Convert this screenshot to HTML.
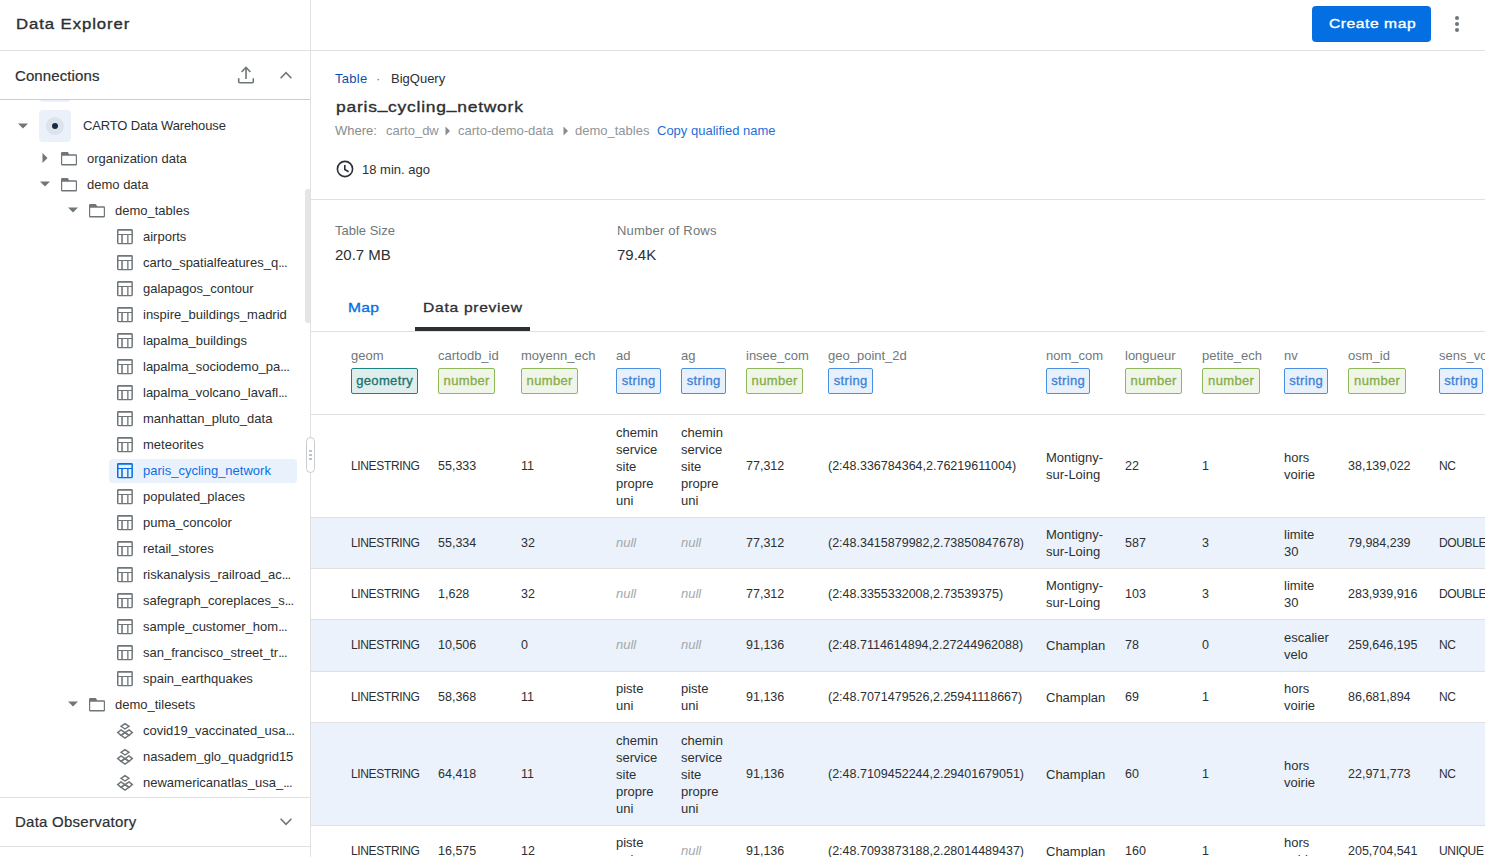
<!DOCTYPE html><html><head><meta charset="utf-8"><style>
*{box-sizing:border-box;margin:0;padding:0}
html,body{width:1485px;height:857px;overflow:hidden;background:#fff}
body{font-family:"Liberation Sans",sans-serif;color:#2c3032;position:relative}
.a{position:absolute;white-space:nowrap}
.hl{position:absolute;background:#e0e0e0}
#side{position:absolute;left:0;top:0;width:310px;height:857px;overflow:hidden}
#main{position:absolute;left:311px;top:0;width:1174px;height:857px;overflow:hidden}
.tree{position:absolute;left:0;top:100px;width:305px;height:697px;overflow:hidden}
.tr{position:absolute;left:0;height:26px;width:305px}
.tt{position:absolute;top:0;line-height:26px;font-size:13px;white-space:nowrap}
svg{position:absolute;overflow:visible}
.cell{position:absolute;display:flex;align-items:center;font-size:13px;line-height:17px;white-space:nowrap}
.sb{-webkit-text-stroke:0.45px currentColor}
.mont{-webkit-text-stroke:0.35px currentColor;transform:scaleX(1.14);transform-origin:0 0}
.cap{font-size:12px;letter-spacing:-0.35px}
.dg{font-size:12.5px}
.null{color:#a3a8ab;font-style:italic;position:relative;top:-0.8px}
.chip{position:absolute;top:368px;height:26px;border:1px solid;border-radius:2px;font-size:13px;font-weight:400;-webkit-text-stroke:0.3px currentColor;letter-spacing:0.35px;line-height:24px;text-align:center;text-indent:0.35px}
.num{border-color:#8fb85a;background:#f0f5e9;color:#86ad45}
.str{border-color:#4a90e2;background:#e7f0fb;color:#3d82d9}
.geo{border-color:#1d8580;background:#e0eded;color:#17746f}
.ch{position:absolute;top:347px;font-size:13px;line-height:17px;color:#6f777b;white-space:nowrap}
</style></head><body>
<div id="side">
<div class="a mont" style="left:15.5px;top:13.7px;font-size:14.7px;line-height:20px;letter-spacing:0.8px">Data Explorer</div>
<div class="hl" style="left:0;top:50px;width:310px;height:1px"></div>
<div class="a" style="left:15px;top:66px;font-size:15px;line-height:20px;letter-spacing:0.1px;-webkit-text-stroke:0.2px currentColor">Connections</div>
<svg style="left:236px;top:65px" width="20" height="20" viewBox="0 0 20 20"><path d="M10 2.5V14 M5.6 7 L10 2.5 L14.4 7 M2.7 13.2V16.8a1 1 0 0 0 1 1H16.3a1 1 0 0 0 1-1V13.2" fill="none" stroke="#6f7679" stroke-width="1.6"/></svg>
<svg style="left:276px;top:65px" width="20" height="20" viewBox="0 0 20 20"><path d="M4.6 13.2 L10 7.6 L15.4 13.2" fill="none" stroke="#6f7679" stroke-width="1.6"/></svg>
<div class="hl" style="left:0;top:99px;width:310px;height:1px;background:#cdcdcd"></div>
<div class="tree">
<div style="position:absolute;left:39px;top:-30px;width:32px;height:32px;border-radius:4px;background:#eaf1fb"></div>
<svg style="left:18px;top:23px" width="10" height="6" viewBox="0 0 10 6"><path d="M0 0.5H10L5 5.5Z" fill="#6f7679"/></svg>
<div style="position:absolute;left:39px;top:10px;width:32px;height:32px;border-radius:4px;background:#eaf1fb"></div>
<div style="position:absolute;left:46px;top:17px;width:18px;height:18px;border-radius:50%;background:#dde3ea"></div>
<div style="position:absolute;left:52px;top:23px;width:6px;height:6px;border-radius:50%;background:#162945"></div>
<div class="tt" style="left:83px;top:13px;letter-spacing:-0.15px">CARTO Data Warehouse</div>
<svg style="left:42px;top:53px" width="6" height="10" viewBox="0 0 6 10"><path d="M0.5 0V10L5.5 5Z" fill="#6f7679"/></svg>
<svg style="left:60px;top:51px" width="18" height="16" viewBox="0 0 18 16"><path fill-rule="evenodd" d="M1 2.3a1.3 1.3 0 0 1 1.3-1.3H7.8L9.2 3.3H15.7a1.3 1.3 0 0 1 1.3 1.3V13.2a1.3 1.3 0 0 1-1.3 1.3H2.3a1.3 1.3 0 0 1-1.3-1.3Z M2.2 4.8V13H15.8V4.8Z" fill="#6f7679"/></svg>
<div class="tt" style="left:87px;top:45.5px;color:#2c3032">organization data</div>
<svg style="left:40px;top:81px" width="10" height="6" viewBox="0 0 10 6"><path d="M0 0.5H10L5 5.5Z" fill="#6f7679"/></svg>
<svg style="left:60px;top:77px" width="18" height="16" viewBox="0 0 18 16"><path fill-rule="evenodd" d="M1 2.3a1.3 1.3 0 0 1 1.3-1.3H7.8L9.2 3.3H15.7a1.3 1.3 0 0 1 1.3 1.3V13.2a1.3 1.3 0 0 1-1.3 1.3H2.3a1.3 1.3 0 0 1-1.3-1.3Z M2.2 4.8V13H15.8V4.8Z" fill="#6f7679"/></svg>
<div class="tt" style="left:87px;top:71.5px;color:#2c3032">demo data</div>
<svg style="left:68px;top:107px" width="10" height="6" viewBox="0 0 10 6"><path d="M0 0.5H10L5 5.5Z" fill="#6f7679"/></svg>
<svg style="left:88px;top:103px" width="18" height="16" viewBox="0 0 18 16"><path fill-rule="evenodd" d="M1 2.3a1.3 1.3 0 0 1 1.3-1.3H7.8L9.2 3.3H15.7a1.3 1.3 0 0 1 1.3 1.3V13.2a1.3 1.3 0 0 1-1.3 1.3H2.3a1.3 1.3 0 0 1-1.3-1.3Z M2.2 4.8V13H15.8V4.8Z" fill="#6f7679"/></svg>
<div class="tt" style="left:115px;top:97.5px;color:#2c3032">demo_tables</div>
<svg style="left:116px;top:128px" width="18" height="18" viewBox="0 0 18 18"><path fill-rule="evenodd" d="M2.4 1H15.5a1.4 1.4 0 0 1 1.4 1.4V14.8a1.4 1.4 0 0 1-1.4 1.4H2.4a1.4 1.4 0 0 1-1.4-1.4V2.4a1.4 1.4 0 0 1 1.4-1.4Z M2.5 2.8V5.9H15.4V2.8Z M2.5 7.1V15H5.25V7.1Z M6.8 7.1V15H11.2V7.1Z M12.5 7.1V15H15.4V7.1Z" fill="#6f7679"/></svg>
<div class="tt" style="left:143px;top:123.5px;color:#2c3032">airports</div>
<svg style="left:116px;top:154px" width="18" height="18" viewBox="0 0 18 18"><path fill-rule="evenodd" d="M2.4 1H15.5a1.4 1.4 0 0 1 1.4 1.4V14.8a1.4 1.4 0 0 1-1.4 1.4H2.4a1.4 1.4 0 0 1-1.4-1.4V2.4a1.4 1.4 0 0 1 1.4-1.4Z M2.5 2.8V5.9H15.4V2.8Z M2.5 7.1V15H5.25V7.1Z M6.8 7.1V15H11.2V7.1Z M12.5 7.1V15H15.4V7.1Z" fill="#6f7679"/></svg>
<div class="tt" style="left:143px;top:149.5px;color:#2c3032">carto_spatialfeatures_q<span style="letter-spacing:-0.7px">...</span></div>
<svg style="left:116px;top:180px" width="18" height="18" viewBox="0 0 18 18"><path fill-rule="evenodd" d="M2.4 1H15.5a1.4 1.4 0 0 1 1.4 1.4V14.8a1.4 1.4 0 0 1-1.4 1.4H2.4a1.4 1.4 0 0 1-1.4-1.4V2.4a1.4 1.4 0 0 1 1.4-1.4Z M2.5 2.8V5.9H15.4V2.8Z M2.5 7.1V15H5.25V7.1Z M6.8 7.1V15H11.2V7.1Z M12.5 7.1V15H15.4V7.1Z" fill="#6f7679"/></svg>
<div class="tt" style="left:143px;top:175.5px;color:#2c3032">galapagos_contour</div>
<svg style="left:116px;top:206px" width="18" height="18" viewBox="0 0 18 18"><path fill-rule="evenodd" d="M2.4 1H15.5a1.4 1.4 0 0 1 1.4 1.4V14.8a1.4 1.4 0 0 1-1.4 1.4H2.4a1.4 1.4 0 0 1-1.4-1.4V2.4a1.4 1.4 0 0 1 1.4-1.4Z M2.5 2.8V5.9H15.4V2.8Z M2.5 7.1V15H5.25V7.1Z M6.8 7.1V15H11.2V7.1Z M12.5 7.1V15H15.4V7.1Z" fill="#6f7679"/></svg>
<div class="tt" style="left:143px;top:201.5px;color:#2c3032">inspire_buildings_madrid</div>
<svg style="left:116px;top:232px" width="18" height="18" viewBox="0 0 18 18"><path fill-rule="evenodd" d="M2.4 1H15.5a1.4 1.4 0 0 1 1.4 1.4V14.8a1.4 1.4 0 0 1-1.4 1.4H2.4a1.4 1.4 0 0 1-1.4-1.4V2.4a1.4 1.4 0 0 1 1.4-1.4Z M2.5 2.8V5.9H15.4V2.8Z M2.5 7.1V15H5.25V7.1Z M6.8 7.1V15H11.2V7.1Z M12.5 7.1V15H15.4V7.1Z" fill="#6f7679"/></svg>
<div class="tt" style="left:143px;top:227.5px;color:#2c3032">lapalma_buildings</div>
<svg style="left:116px;top:258px" width="18" height="18" viewBox="0 0 18 18"><path fill-rule="evenodd" d="M2.4 1H15.5a1.4 1.4 0 0 1 1.4 1.4V14.8a1.4 1.4 0 0 1-1.4 1.4H2.4a1.4 1.4 0 0 1-1.4-1.4V2.4a1.4 1.4 0 0 1 1.4-1.4Z M2.5 2.8V5.9H15.4V2.8Z M2.5 7.1V15H5.25V7.1Z M6.8 7.1V15H11.2V7.1Z M12.5 7.1V15H15.4V7.1Z" fill="#6f7679"/></svg>
<div class="tt" style="left:143px;top:253.5px;color:#2c3032">lapalma_sociodemo_pa<span style="letter-spacing:-0.7px">...</span></div>
<svg style="left:116px;top:284px" width="18" height="18" viewBox="0 0 18 18"><path fill-rule="evenodd" d="M2.4 1H15.5a1.4 1.4 0 0 1 1.4 1.4V14.8a1.4 1.4 0 0 1-1.4 1.4H2.4a1.4 1.4 0 0 1-1.4-1.4V2.4a1.4 1.4 0 0 1 1.4-1.4Z M2.5 2.8V5.9H15.4V2.8Z M2.5 7.1V15H5.25V7.1Z M6.8 7.1V15H11.2V7.1Z M12.5 7.1V15H15.4V7.1Z" fill="#6f7679"/></svg>
<div class="tt" style="left:143px;top:279.5px;color:#2c3032">lapalma_volcano_lavafl<span style="letter-spacing:-0.7px">...</span></div>
<svg style="left:116px;top:310px" width="18" height="18" viewBox="0 0 18 18"><path fill-rule="evenodd" d="M2.4 1H15.5a1.4 1.4 0 0 1 1.4 1.4V14.8a1.4 1.4 0 0 1-1.4 1.4H2.4a1.4 1.4 0 0 1-1.4-1.4V2.4a1.4 1.4 0 0 1 1.4-1.4Z M2.5 2.8V5.9H15.4V2.8Z M2.5 7.1V15H5.25V7.1Z M6.8 7.1V15H11.2V7.1Z M12.5 7.1V15H15.4V7.1Z" fill="#6f7679"/></svg>
<div class="tt" style="left:143px;top:305.5px;color:#2c3032">manhattan_pluto_data</div>
<svg style="left:116px;top:336px" width="18" height="18" viewBox="0 0 18 18"><path fill-rule="evenodd" d="M2.4 1H15.5a1.4 1.4 0 0 1 1.4 1.4V14.8a1.4 1.4 0 0 1-1.4 1.4H2.4a1.4 1.4 0 0 1-1.4-1.4V2.4a1.4 1.4 0 0 1 1.4-1.4Z M2.5 2.8V5.9H15.4V2.8Z M2.5 7.1V15H5.25V7.1Z M6.8 7.1V15H11.2V7.1Z M12.5 7.1V15H15.4V7.1Z" fill="#6f7679"/></svg>
<div class="tt" style="left:143px;top:331.5px;color:#2c3032">meteorites</div>
<div style="position:absolute;left:109px;top:359px;width:188px;height:24px;border-radius:4px;background:#e9f1fc"></div>
<svg style="left:116px;top:362px" width="18" height="18" viewBox="0 0 18 18"><path fill-rule="evenodd" d="M2.4 1H15.5a1.4 1.4 0 0 1 1.4 1.4V14.8a1.4 1.4 0 0 1-1.4 1.4H2.4a1.4 1.4 0 0 1-1.4-1.4V2.4a1.4 1.4 0 0 1 1.4-1.4Z M2.5 2.8V5.9H15.4V2.8Z M2.5 7.1V15H5.25V7.1Z M6.8 7.1V15H11.2V7.1Z M12.5 7.1V15H15.4V7.1Z" fill="#036fe2"/></svg>
<div class="tt" style="left:143px;top:357.5px;color:#0d6fe6">paris_cycling_network</div>
<svg style="left:116px;top:388px" width="18" height="18" viewBox="0 0 18 18"><path fill-rule="evenodd" d="M2.4 1H15.5a1.4 1.4 0 0 1 1.4 1.4V14.8a1.4 1.4 0 0 1-1.4 1.4H2.4a1.4 1.4 0 0 1-1.4-1.4V2.4a1.4 1.4 0 0 1 1.4-1.4Z M2.5 2.8V5.9H15.4V2.8Z M2.5 7.1V15H5.25V7.1Z M6.8 7.1V15H11.2V7.1Z M12.5 7.1V15H15.4V7.1Z" fill="#6f7679"/></svg>
<div class="tt" style="left:143px;top:383.5px;color:#2c3032">populated_places</div>
<svg style="left:116px;top:414px" width="18" height="18" viewBox="0 0 18 18"><path fill-rule="evenodd" d="M2.4 1H15.5a1.4 1.4 0 0 1 1.4 1.4V14.8a1.4 1.4 0 0 1-1.4 1.4H2.4a1.4 1.4 0 0 1-1.4-1.4V2.4a1.4 1.4 0 0 1 1.4-1.4Z M2.5 2.8V5.9H15.4V2.8Z M2.5 7.1V15H5.25V7.1Z M6.8 7.1V15H11.2V7.1Z M12.5 7.1V15H15.4V7.1Z" fill="#6f7679"/></svg>
<div class="tt" style="left:143px;top:409.5px;color:#2c3032">puma_concolor</div>
<svg style="left:116px;top:440px" width="18" height="18" viewBox="0 0 18 18"><path fill-rule="evenodd" d="M2.4 1H15.5a1.4 1.4 0 0 1 1.4 1.4V14.8a1.4 1.4 0 0 1-1.4 1.4H2.4a1.4 1.4 0 0 1-1.4-1.4V2.4a1.4 1.4 0 0 1 1.4-1.4Z M2.5 2.8V5.9H15.4V2.8Z M2.5 7.1V15H5.25V7.1Z M6.8 7.1V15H11.2V7.1Z M12.5 7.1V15H15.4V7.1Z" fill="#6f7679"/></svg>
<div class="tt" style="left:143px;top:435.5px;color:#2c3032">retail_stores</div>
<svg style="left:116px;top:466px" width="18" height="18" viewBox="0 0 18 18"><path fill-rule="evenodd" d="M2.4 1H15.5a1.4 1.4 0 0 1 1.4 1.4V14.8a1.4 1.4 0 0 1-1.4 1.4H2.4a1.4 1.4 0 0 1-1.4-1.4V2.4a1.4 1.4 0 0 1 1.4-1.4Z M2.5 2.8V5.9H15.4V2.8Z M2.5 7.1V15H5.25V7.1Z M6.8 7.1V15H11.2V7.1Z M12.5 7.1V15H15.4V7.1Z" fill="#6f7679"/></svg>
<div class="tt" style="left:143px;top:461.5px;color:#2c3032">riskanalysis_railroad_ac<span style="letter-spacing:-0.7px">...</span></div>
<svg style="left:116px;top:492px" width="18" height="18" viewBox="0 0 18 18"><path fill-rule="evenodd" d="M2.4 1H15.5a1.4 1.4 0 0 1 1.4 1.4V14.8a1.4 1.4 0 0 1-1.4 1.4H2.4a1.4 1.4 0 0 1-1.4-1.4V2.4a1.4 1.4 0 0 1 1.4-1.4Z M2.5 2.8V5.9H15.4V2.8Z M2.5 7.1V15H5.25V7.1Z M6.8 7.1V15H11.2V7.1Z M12.5 7.1V15H15.4V7.1Z" fill="#6f7679"/></svg>
<div class="tt" style="left:143px;top:487.5px;color:#2c3032">safegraph_coreplaces_s<span style="letter-spacing:-0.7px">...</span></div>
<svg style="left:116px;top:518px" width="18" height="18" viewBox="0 0 18 18"><path fill-rule="evenodd" d="M2.4 1H15.5a1.4 1.4 0 0 1 1.4 1.4V14.8a1.4 1.4 0 0 1-1.4 1.4H2.4a1.4 1.4 0 0 1-1.4-1.4V2.4a1.4 1.4 0 0 1 1.4-1.4Z M2.5 2.8V5.9H15.4V2.8Z M2.5 7.1V15H5.25V7.1Z M6.8 7.1V15H11.2V7.1Z M12.5 7.1V15H15.4V7.1Z" fill="#6f7679"/></svg>
<div class="tt" style="left:143px;top:513.5px;color:#2c3032">sample_customer_hom<span style="letter-spacing:-0.7px">...</span></div>
<svg style="left:116px;top:544px" width="18" height="18" viewBox="0 0 18 18"><path fill-rule="evenodd" d="M2.4 1H15.5a1.4 1.4 0 0 1 1.4 1.4V14.8a1.4 1.4 0 0 1-1.4 1.4H2.4a1.4 1.4 0 0 1-1.4-1.4V2.4a1.4 1.4 0 0 1 1.4-1.4Z M2.5 2.8V5.9H15.4V2.8Z M2.5 7.1V15H5.25V7.1Z M6.8 7.1V15H11.2V7.1Z M12.5 7.1V15H15.4V7.1Z" fill="#6f7679"/></svg>
<div class="tt" style="left:143px;top:539.5px;color:#2c3032">san_francisco_street_tr<span style="letter-spacing:-0.7px">...</span></div>
<svg style="left:116px;top:570px" width="18" height="18" viewBox="0 0 18 18"><path fill-rule="evenodd" d="M2.4 1H15.5a1.4 1.4 0 0 1 1.4 1.4V14.8a1.4 1.4 0 0 1-1.4 1.4H2.4a1.4 1.4 0 0 1-1.4-1.4V2.4a1.4 1.4 0 0 1 1.4-1.4Z M2.5 2.8V5.9H15.4V2.8Z M2.5 7.1V15H5.25V7.1Z M6.8 7.1V15H11.2V7.1Z M12.5 7.1V15H15.4V7.1Z" fill="#6f7679"/></svg>
<div class="tt" style="left:143px;top:565.5px;color:#2c3032">spain_earthquakes</div>
<svg style="left:68px;top:601px" width="10" height="6" viewBox="0 0 10 6"><path d="M0 0.5H10L5 5.5Z" fill="#6f7679"/></svg>
<svg style="left:88px;top:597px" width="18" height="16" viewBox="0 0 18 16"><path fill-rule="evenodd" d="M1 2.3a1.3 1.3 0 0 1 1.3-1.3H7.8L9.2 3.3H15.7a1.3 1.3 0 0 1 1.3 1.3V13.2a1.3 1.3 0 0 1-1.3 1.3H2.3a1.3 1.3 0 0 1-1.3-1.3Z M2.2 4.8V13H15.8V4.8Z" fill="#6f7679"/></svg>
<div class="tt" style="left:115px;top:591.5px;color:#2c3032">demo_tilesets</div>
<svg style="left:116px;top:621px" width="18" height="19" viewBox="0 0 18 19"><g fill="none" stroke="#6f7679" stroke-width="1.45" stroke-linejoin="miter"><path d="M1.7 11.6L5 9.0L8.9 11.6L5 14.3Z"/><path d="M9.1 11.6L13 9.0L16.3 11.6L13 14.3Z"/><path d="M5 14.3L9 11.6L13 14.3L9 17.1Z"/><path d="M5 5.3L9 2.6L13 5.3L9 8.0Z"/></g></svg>
<div class="tt" style="left:143px;top:617.5px;color:#2c3032">covid19_vaccinated_usa<span style="letter-spacing:-0.7px">...</span></div>
<svg style="left:116px;top:647px" width="18" height="19" viewBox="0 0 18 19"><g fill="none" stroke="#6f7679" stroke-width="1.45" stroke-linejoin="miter"><path d="M1.7 11.6L5 9.0L8.9 11.6L5 14.3Z"/><path d="M9.1 11.6L13 9.0L16.3 11.6L13 14.3Z"/><path d="M5 14.3L9 11.6L13 14.3L9 17.1Z"/><path d="M5 5.3L9 2.6L13 5.3L9 8.0Z"/></g></svg>
<div class="tt" style="left:143px;top:643.5px;color:#2c3032">nasadem_glo_quadgrid15</div>
<svg style="left:116px;top:673px" width="18" height="19" viewBox="0 0 18 19"><g fill="none" stroke="#6f7679" stroke-width="1.45" stroke-linejoin="miter"><path d="M1.7 11.6L5 9.0L8.9 11.6L5 14.3Z"/><path d="M9.1 11.6L13 9.0L16.3 11.6L13 14.3Z"/><path d="M5 14.3L9 11.6L13 14.3L9 17.1Z"/><path d="M5 5.3L9 2.6L13 5.3L9 8.0Z"/></g></svg>
<div class="tt" style="left:143px;top:669.5px;color:#2c3032">newamericanatlas_usa_<span style="letter-spacing:-0.7px">...</span></div>
</div>
<div style="position:absolute;left:305px;top:189px;width:5px;height:134px;border-radius:3px 0 0 3px;background:#e3e5e6"></div>
<div class="hl" style="left:0;top:797px;width:310px;height:1px"></div>
<div class="a" style="left:15px;top:812px;font-size:15px;line-height:20px;letter-spacing:0.25px;-webkit-text-stroke:0.2px currentColor">Data Observatory</div>
<svg style="left:276px;top:812px" width="20" height="20" viewBox="0 0 20 20"><path d="M4.6 6.8 L10 12.4 L15.4 6.8" fill="none" stroke="#6f7679" stroke-width="1.6"/></svg>
<div class="hl" style="left:0;top:846px;width:310px;height:1px"></div>
</div>
<div class="hl" style="left:310px;top:0;width:1px;height:857px"></div>
<div id="main">
<div class="hl" style="left:0;top:50px;width:1174px;height:1px"></div>
<div class="a" style="left:1001px;top:6px;width:119px;height:36px;border-radius:4px;background:#036fe2"></div>
<div class="a mont" style="left:1017.7px;top:14.9px;font-size:13px;line-height:18px;color:#fff;letter-spacing:0.47px;transform:scaleX(1.2)">Create map</div>
<div style="position:absolute;left:1144px;top:16px;width:4px;height:4px;border-radius:50%;background:#6f7679"></div>
<div style="position:absolute;left:1144px;top:22px;width:4px;height:4px;border-radius:50%;background:#6f7679"></div>
<div style="position:absolute;left:1144px;top:28px;width:4px;height:4px;border-radius:50%;background:#6f7679"></div>
<div class="a" style="left:24px;top:70px;font-size:13px;line-height:17px;color:#0c4fae;letter-spacing:0.3px">Table</div>
<div class="a" style="left:65px;top:70px;font-size:13px;line-height:17px;color:#6f777b">·</div>
<div class="a" style="left:80px;top:70px;font-size:13px;line-height:17px;color:#2c3032">BigQuery</div>
<div class="a mont" style="left:24.5px;top:96.6px;font-size:15.3px;line-height:20px;letter-spacing:0.67px">paris<span style="position:relative;top:-3px">_</span>cycling<span style="position:relative;top:-3px">_</span>network</div>
<div class="a" style="left:24px;top:122px;font-size:13px;line-height:17px;color:#868c90">Where:</div>
<div class="a" style="left:75px;top:122px;font-size:13px;line-height:17px;color:#8f9599">carto_dw</div>
<svg style="left:134px;top:126px" width="6" height="10" viewBox="0 0 6 10"><path d="M0.5 0.5V9.5L5 5Z" fill="#868c90"/></svg>
<div class="a" style="left:147px;top:122px;font-size:13px;line-height:17px;color:#8f9599">carto-demo-data</div>
<svg style="left:252px;top:126px" width="6" height="10" viewBox="0 0 6 10"><path d="M0.5 0.5V9.5L5 5Z" fill="#868c90"/></svg>
<div class="a" style="left:264px;top:122px;font-size:13px;line-height:17px;color:#8f9599">demo_tables</div>
<div class="a" style="left:346px;top:122px;font-size:13px;line-height:17px;color:#1d6fdc">Copy qualified name</div>
<svg style="left:25px;top:160px" width="18" height="18" viewBox="0 0 18 18"><circle cx="9" cy="9" r="7.6" fill="none" stroke="#2c3032" stroke-width="1.6"/><path d="M8.8 4.9V9.5L12.6 11.8" fill="none" stroke="#2c3032" stroke-width="1.6"/></svg>
<div class="a" style="left:51px;top:161px;font-size:13px;line-height:17px">18 min. ago</div>
<div class="hl" style="left:0;top:199px;width:1174px;height:1px"></div>
<div class="a" style="left:24px;top:222px;font-size:13px;line-height:17px;color:#6f777b">Table Size</div>
<div class="a" style="left:24px;top:246px;font-size:15px;line-height:18px">20.7 MB</div>
<div class="a" style="left:306px;top:222px;font-size:13px;line-height:17px;color:#6f777b;letter-spacing:0.2px">Number of Rows</div>
<div class="a" style="left:306px;top:246px;font-size:15px;line-height:18px">79.4K</div>
<div class="a mont" style="left:36.69999999999999px;top:299.2px;font-size:13px;line-height:18px;color:#036fe2;-webkit-text-stroke-width:0.3px;letter-spacing:0.2px;transform:scaleX(1.2)">Map</div>
<div class="a mont" style="left:112.19999999999999px;top:299.2px;font-size:13px;line-height:18px;letter-spacing:0.6px;-webkit-text-stroke-width:0.3px;transform:scaleX(1.2)">Data preview</div>
<div style="position:absolute;left:104px;top:327px;width:115px;height:4px;background:#2c3032"></div>
<div class="hl" style="left:0;top:331px;width:1174px;height:1px"></div>
<div class="ch" style="left:40px">geom</div>
<div class="chip geo" style="left:40px;width:67px">geometry</div>
<div class="ch" style="left:127px">cartodb_id</div>
<div class="chip num" style="left:127px;width:57px">number</div>
<div class="ch" style="left:210px">moyenn_ech</div>
<div class="chip num" style="left:210px;width:57px">number</div>
<div class="ch" style="left:305px">ad</div>
<div class="chip str" style="left:305px;width:45px">string</div>
<div class="ch" style="left:370px">ag</div>
<div class="chip str" style="left:370px;width:45px">string</div>
<div class="ch" style="left:435px">insee_com</div>
<div class="chip num" style="left:435px;width:57px">number</div>
<div class="ch" style="left:517px">geo_point_2d</div>
<div class="chip str" style="left:517px;width:45px">string</div>
<div class="ch" style="left:735px">nom_com</div>
<div class="chip str" style="left:735px;width:44px">string</div>
<div class="ch" style="left:814px">longueur</div>
<div class="chip num" style="left:814px;width:57px">number</div>
<div class="ch" style="left:891px">petite_ech</div>
<div class="chip num" style="left:891px;width:58px">number</div>
<div class="ch" style="left:973px">nv</div>
<div class="chip str" style="left:973px;width:44px">string</div>
<div class="ch" style="left:1037px">osm_id</div>
<div class="chip num" style="left:1037px;width:58px">number</div>
<div class="ch" style="left:1128px">sens_voie</div>
<div class="chip str" style="left:1128px;width:44px">string</div>
<div class="hl" style="left:0;top:414px;width:1174px;height:1px"></div>
<div class="cell cap" style="left:40px;top:415px;height:102px">LINESTRING</div>
<div class="cell dg" style="left:127px;top:415px;height:102px">55,333</div>
<div class="cell dg" style="left:210px;top:415px;height:102px">11</div>
<div class="cell" style="left:305px;top:415px;height:102px">chemin<br>service<br>site<br>propre<br>uni</div>
<div class="cell" style="left:370px;top:415px;height:102px">chemin<br>service<br>site<br>propre<br>uni</div>
<div class="cell dg" style="left:435px;top:415px;height:102px">77,312</div>
<div class="cell dg" style="left:517px;top:415px;height:102px">(2:48.336784364,2.76219611004)</div>
<div class="cell" style="left:735px;top:415px;height:102px">Montigny-<br>sur-Loing</div>
<div class="cell dg" style="left:814px;top:415px;height:102px">22</div>
<div class="cell dg" style="left:891px;top:415px;height:102px">1</div>
<div class="cell" style="left:973px;top:415px;height:102px">hors<br>voirie</div>
<div class="cell dg" style="left:1037px;top:415px;height:102px">38,139,022</div>
<div class="cell cap" style="left:1128px;top:415px;height:102px">NC</div>
<div class="hl" style="left:0;top:517px;width:1174px;height:1px"></div>
<div style="position:absolute;left:0;top:518px;width:1174px;height:50px;background:#ebf2fb"></div>
<div class="cell cap" style="left:40px;top:518px;height:50px">LINESTRING</div>
<div class="cell dg" style="left:127px;top:518px;height:50px">55,334</div>
<div class="cell dg" style="left:210px;top:518px;height:50px">32</div>
<div class="cell" style="left:305px;top:518px;height:50px"><span class="null">null</span></div>
<div class="cell" style="left:370px;top:518px;height:50px"><span class="null">null</span></div>
<div class="cell dg" style="left:435px;top:518px;height:50px">77,312</div>
<div class="cell dg" style="left:517px;top:518px;height:50px">(2:48.3415879982,2.73850847678)</div>
<div class="cell" style="left:735px;top:518px;height:50px">Montigny-<br>sur-Loing</div>
<div class="cell dg" style="left:814px;top:518px;height:50px">587</div>
<div class="cell dg" style="left:891px;top:518px;height:50px">3</div>
<div class="cell" style="left:973px;top:518px;height:50px">limite<br>30</div>
<div class="cell dg" style="left:1037px;top:518px;height:50px">79,984,239</div>
<div class="cell cap" style="left:1128px;top:518px;height:50px">DOUBLE</div>
<div class="hl" style="left:0;top:568px;width:1174px;height:1px"></div>
<div class="cell cap" style="left:40px;top:569px;height:50px">LINESTRING</div>
<div class="cell dg" style="left:127px;top:569px;height:50px">1,628</div>
<div class="cell dg" style="left:210px;top:569px;height:50px">32</div>
<div class="cell" style="left:305px;top:569px;height:50px"><span class="null">null</span></div>
<div class="cell" style="left:370px;top:569px;height:50px"><span class="null">null</span></div>
<div class="cell dg" style="left:435px;top:569px;height:50px">77,312</div>
<div class="cell dg" style="left:517px;top:569px;height:50px">(2:48.3355332008,2.73539375)</div>
<div class="cell" style="left:735px;top:569px;height:50px">Montigny-<br>sur-Loing</div>
<div class="cell dg" style="left:814px;top:569px;height:50px">103</div>
<div class="cell dg" style="left:891px;top:569px;height:50px">3</div>
<div class="cell" style="left:973px;top:569px;height:50px">limite<br>30</div>
<div class="cell dg" style="left:1037px;top:569px;height:50px">283,939,916</div>
<div class="cell cap" style="left:1128px;top:569px;height:50px">DOUBLE</div>
<div class="hl" style="left:0;top:619px;width:1174px;height:1px"></div>
<div style="position:absolute;left:0;top:620px;width:1174px;height:51px;background:#ebf2fb"></div>
<div class="cell cap" style="left:40px;top:620px;height:51px">LINESTRING</div>
<div class="cell dg" style="left:127px;top:620px;height:51px">10,506</div>
<div class="cell dg" style="left:210px;top:620px;height:51px">0</div>
<div class="cell" style="left:305px;top:620px;height:51px"><span class="null">null</span></div>
<div class="cell" style="left:370px;top:620px;height:51px"><span class="null">null</span></div>
<div class="cell dg" style="left:435px;top:620px;height:51px">91,136</div>
<div class="cell dg" style="left:517px;top:620px;height:51px">(2:48.7114614894,2.27244962088)</div>
<div class="cell" style="left:735px;top:620px;height:51px">Champlan</div>
<div class="cell dg" style="left:814px;top:620px;height:51px">78</div>
<div class="cell dg" style="left:891px;top:620px;height:51px">0</div>
<div class="cell" style="left:973px;top:620px;height:51px">escalier<br>velo</div>
<div class="cell dg" style="left:1037px;top:620px;height:51px">259,646,195</div>
<div class="cell cap" style="left:1128px;top:620px;height:51px">NC</div>
<div class="hl" style="left:0;top:671px;width:1174px;height:1px"></div>
<div class="cell cap" style="left:40px;top:672px;height:50px">LINESTRING</div>
<div class="cell dg" style="left:127px;top:672px;height:50px">58,368</div>
<div class="cell dg" style="left:210px;top:672px;height:50px">11</div>
<div class="cell" style="left:305px;top:672px;height:50px">piste<br>uni</div>
<div class="cell" style="left:370px;top:672px;height:50px">piste<br>uni</div>
<div class="cell dg" style="left:435px;top:672px;height:50px">91,136</div>
<div class="cell dg" style="left:517px;top:672px;height:50px">(2:48.7071479526,2.25941118667)</div>
<div class="cell" style="left:735px;top:672px;height:50px">Champlan</div>
<div class="cell dg" style="left:814px;top:672px;height:50px">69</div>
<div class="cell dg" style="left:891px;top:672px;height:50px">1</div>
<div class="cell" style="left:973px;top:672px;height:50px">hors<br>voirie</div>
<div class="cell dg" style="left:1037px;top:672px;height:50px">86,681,894</div>
<div class="cell cap" style="left:1128px;top:672px;height:50px">NC</div>
<div class="hl" style="left:0;top:722px;width:1174px;height:1px"></div>
<div style="position:absolute;left:0;top:723px;width:1174px;height:102px;background:#ebf2fb"></div>
<div class="cell cap" style="left:40px;top:723px;height:102px">LINESTRING</div>
<div class="cell dg" style="left:127px;top:723px;height:102px">64,418</div>
<div class="cell dg" style="left:210px;top:723px;height:102px">11</div>
<div class="cell" style="left:305px;top:723px;height:102px">chemin<br>service<br>site<br>propre<br>uni</div>
<div class="cell" style="left:370px;top:723px;height:102px">chemin<br>service<br>site<br>propre<br>uni</div>
<div class="cell dg" style="left:435px;top:723px;height:102px">91,136</div>
<div class="cell dg" style="left:517px;top:723px;height:102px">(2:48.7109452244,2.29401679051)</div>
<div class="cell" style="left:735px;top:723px;height:102px">Champlan</div>
<div class="cell dg" style="left:814px;top:723px;height:102px">60</div>
<div class="cell dg" style="left:891px;top:723px;height:102px">1</div>
<div class="cell" style="left:973px;top:723px;height:102px">hors<br>voirie</div>
<div class="cell dg" style="left:1037px;top:723px;height:102px">22,971,773</div>
<div class="cell cap" style="left:1128px;top:723px;height:102px">NC</div>
<div class="hl" style="left:0;top:825px;width:1174px;height:1px"></div>
<div class="cell cap" style="left:40px;top:826px;height:50px">LINESTRING</div>
<div class="cell dg" style="left:127px;top:826px;height:50px">16,575</div>
<div class="cell dg" style="left:210px;top:826px;height:50px">12</div>
<div class="cell" style="left:305px;top:826px;height:50px">piste<br>uni</div>
<div class="cell" style="left:370px;top:826px;height:50px"><span class="null">null</span></div>
<div class="cell dg" style="left:435px;top:826px;height:50px">91,136</div>
<div class="cell dg" style="left:517px;top:826px;height:50px">(2:48.7093873188,2.28014489437)</div>
<div class="cell" style="left:735px;top:826px;height:50px">Champlan</div>
<div class="cell dg" style="left:814px;top:826px;height:50px">160</div>
<div class="cell dg" style="left:891px;top:826px;height:50px">1</div>
<div class="cell" style="left:973px;top:826px;height:50px">hors<br>voirie</div>
<div class="cell dg" style="left:1037px;top:826px;height:50px">205,704,541</div>
<div class="cell cap" style="left:1128px;top:826px;height:50px">UNIQUE</div>
<div class="hl" style="left:0;top:876px;width:1174px;height:1px"></div>
</div>
<div style="position:absolute;left:306px;top:437px;width:9px;height:36px;border:1px solid #c9cccf;border-radius:4.5px;background:#fff"></div>
<div style="position:absolute;left:309px;top:450px;width:3px;height:2px;background:#bfc3c6"></div>
<div style="position:absolute;left:309px;top:454px;width:3px;height:2px;background:#bfc3c6"></div>
<div style="position:absolute;left:309px;top:458px;width:3px;height:2px;background:#bfc3c6"></div>
</body></html>
